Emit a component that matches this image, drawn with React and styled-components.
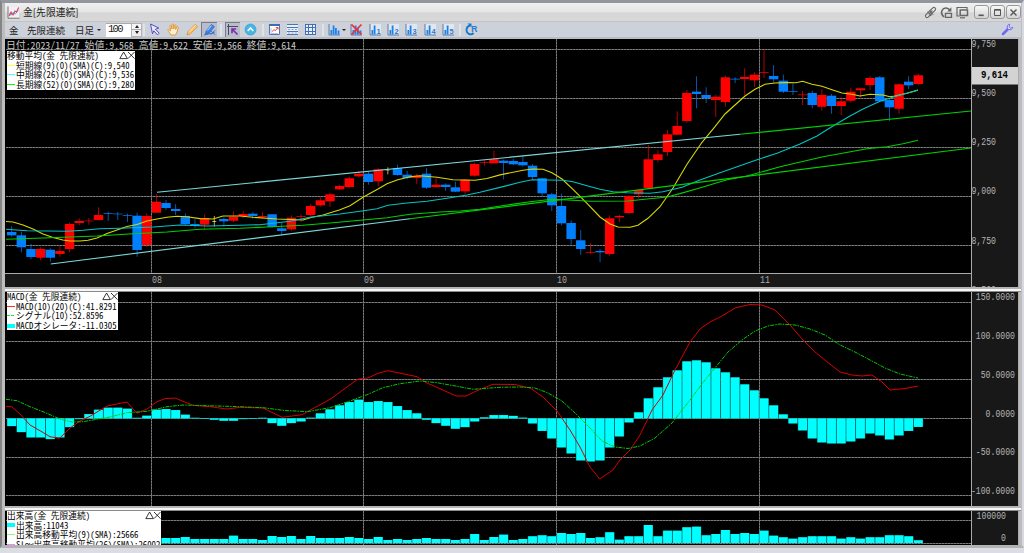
import React from 'react';
import styled, { createGlobalStyle } from 'styled-components'

const RED = '#ff0000';
const BLUE = '#0080ff';
const CYAN = '#00ffff';
const FIRST_X = 11.7;
const PITCH = 9.645;

const xAt = (i) => FIRST_X + i * PITCH;

// [color, body top, body bottom, high, low]
const candles = [
  ['b', 232, 235.3, 226, 236.7], ['b', 235.3, 247.3, 231.7, 252.3], ['b', 249, 257, 244, 259],
  ['r', 249, 257.7, 247.3, 260], ['b', 249.7, 257.7, 248.3, 261.7], ['r', 251, 254, 246, 256.7],
  ['r', 224, 249, 222.7, 252.3], ['r', 221, 223, 218.3, 225.3], ['r', 220.7, 221.3, 218, 224.7],
  ['r', 215, 220, 207.3, 220], ['b', 213.3, 214, 211.7, 221], ['b', 213.7, 214.3, 212, 220],
  ['b', 215.3, 216, 213.7, 222], ['b', 215.7, 250, 212.7, 256.7], ['r', 216, 245, 213.3, 246.7],
  ['r', 201.7, 212.7, 194, 212.7], ['b', 203, 208, 200, 210], ['b', 209, 211, 204, 215],
  ['b', 216, 224, 213.3, 226], ['b', 224, 226, 219.3, 227.7], ['r', 218, 224.7, 214.7, 229.3],
  ['y', 221, 221.7, 216, 226.7], ['b', 219, 221.3, 217.3, 226.7], ['r', 216.7, 220.7, 211.3, 222],
  ['r', 214, 216, 211.3, 218], ['b', 213.7, 216, 212.3, 218.7], ['r', 216, 217, 212.3, 218.3],
  ['b', 214.3, 227, 214, 227.7], ['b', 228.3, 231, 222.7, 235], ['r', 217.7, 229.3, 215.3, 230.7],
  ['r', 216, 216.7, 214, 221.7], ['r', 206, 215, 204, 216.7], ['r', 200.3, 205.3, 197.3, 206.7],
  ['r', 194.3, 201.3, 192.7, 207], ['r', 186, 189.3, 184.7, 190], ['r', 178.3, 187, 176.7, 187.7],
  ['r', 173.7, 176.3, 171, 177.7], ['b', 173.7, 182, 172, 184.7], ['r', 169.3, 181.3, 168.3, 186],
  ['y', 170.7, 171, 167.3, 174.3], ['b', 168.3, 175, 164.7, 175.7], ['b', 174.7, 178, 171, 179.3],
  ['r', 175.7, 178, 173.7, 184], ['b', 173.7, 187.7, 168, 189], ['r', 184.7, 187, 178.3, 187.7],
  ['b', 184.7, 187, 183.3, 191], ['b', 187.3, 191.7, 181.7, 192], ['r', 179.7, 191.3, 179, 194],
  ['r', 164, 175.7, 162.7, 176.7], ['r', 162, 162.7, 159.7, 165.7], ['r', 159, 163.3, 150.7, 163.3],
  ['b', 160.7, 163, 159.7, 179.3], ['b', 161, 164.3, 159, 165.3], ['b', 162, 165.3, 155.7, 166.3],
  ['b', 165.7, 177, 164, 180], ['b', 178.3, 193.3, 177.7, 196.7], ['b', 194.3, 205.3, 192.7, 211],
  ['b', 206, 223.3, 193.7, 225.3], ['b', 223, 239, 220.3, 244.7], ['b', 240.3, 249, 230, 254.7],
  ['r', 252, 252.7, 243, 254], ['b', 251, 252.3, 249, 262], ['r', 218.3, 254, 215.3, 255.7],
  ['r', 216, 217.3, 215, 222], ['r', 196, 213, 195.3, 214], ['r', 190, 194.3, 189, 198.3],
  ['r', 159.3, 188, 144.7, 188.7], ['r', 154.3, 160, 150.3, 162.3], ['r', 134.3, 152, 130, 156],
  ['r', 126, 134.7, 111.3, 134.7], ['r', 93, 121, 90, 122.7], ['b', 91.7, 94, 76.3, 108.3],
  ['b', 95, 98, 87.3, 103], ['r', 96.7, 100, 94.7, 117], ['r', 77.3, 102, 75.7, 106.7],
  ['b', 78.7, 79.5, 77.3, 83], ['r', 77, 79, 68.3, 95], ['r', 74.7, 80.3, 72.3, 86.7],
  ['r', 72, 72.7, 49.7, 78], ['b', 76, 79.3, 65, 82.7], ['b', 80.7, 91.7, 74.7, 93],
  ['b', 91.3, 92, 83.3, 95], ['r', 94.5, 95.2, 91, 105], ['b', 93, 105, 90.7, 108.3],
  ['r', 95, 106.7, 89.3, 110.7], ['b', 95.7, 106, 94, 113.7], ['r', 101.3, 106, 97.3, 115],
  ['r', 91.7, 100.7, 87.7, 102.7], ['r', 88.3, 90.3, 88.3, 97.3], ['r', 78, 85, 76, 90],
  ['b', 77.3, 101.3, 76, 101.7], ['b', 100, 107.3, 98.3, 121], ['r', 84.3, 108.7, 83.7, 113.7],
  ['b', 81.7, 85.3, 76.3, 89], ['r', 75.3, 84, 73.7, 85],
];

const shortMa = '6,221.5 13,222 23,225 33,229 43,234 53,237.5 63,240 70,241 80,241 88,240.3 97,238 107,233.5 117,230 127,226.5 137,224.5 147,221 157,219 167,217.3 177,216.3 187,216.7 200,218.6 213,219 223,216 240,216 253,217.3 277,219 303,220 312,217.3 323,215 340,209.7 350,205.7 363,197.3 378,189 387,183.7 397,180 410,176.7 420,175.7 437,177.3 453,179.7 475,180.3 487,178.5 500,174.9 523,170.3 533,169 543,169.3 552,172.7 562,179 573,189.3 587,203.3 600,217 610,224 618,227 630,227.3 638,225.3 648,218.3 660,206.7 673,188 687,164.3 702,142.3 715,126.7 725,114 735,105 745,96 755,89.3 765,84.3 775,83 787,82.6 796,82.7 802.7,81.3 812,84.3 822,86.3 832,89.7 842,93 852,94.3 860,96 870,94.3 883,95 890,96.7 895,96 907,93.3 918,90';
const midMa = '6,229.3 27,230.7 67,231.3 83,230.3 100,228.7 120,228.3 153,227 180,225 207,226 240,225.3 260,224.7 277,222.7 290,221.3 310,217.3 340,214 360,211.3 377,208.7 388,205.3 407,203 427,201.3 447,198.3 467,195 480,192.3 500,187.4 520,182.3 532,179.7 563,180.3 573,181.7 587,185.7 600,189.3 613,191.7 627,192.7 650,193.3 663,191.7 682,187.3 700,180 720,172.7 740,165.7 757,159.7 777,153.3 800,144 817,136 833,126 850,116 863,109 880,101.3 900,95 918,90.3';
const longMa = '6,239.3 43,238 97,236 133,233.7 167,232 200,229.3 240,228.3 267,227 303,225.3 330,223 363,220 387,217.7 410,214.3 440,212 460,211 480,209.3 507,205 530,201.7 552,199.3 573,200.3 590,201.3 628,201 647,199 667,197 680,193.6 703,187 727,179.7 747,176 780,166.8 823,156.7 867,148.7 887,146.7 903,143.7 918,140.3';

const macdLine = '6,406.3 11.7,406.7 20,414 30,425 40,430.7 50,436.7 59.5,438.3 70,428 80,421 90,416.3 107,406 117,404 127,402 137,413.3 147,409 157,401.7 165,398.7 175,398 183,401.3 193,405.3 210,406.7 227,409 240,407.3 263,408 282,417.3 302,414.7 330,399.3 358,379 368,378 378,373.3 388,370.7 417,376.7 427,383 440,388.7 456,396 466,396 477,390.7 493,384.3 515,384.5 530,388 543,397 557,411 570,430 580,447 590,467 599.7,479 613,470 620,460 630,450 640,435 652,410 663,395 675,370 690,342 700,329 710,322 722,316 735,308 750,304.5 762,305 775,310 790,325 803,340 815,352 826,361 840,372 852,375 862,376 872,375 882,382 890,390 905,388.5 918,386';
const signalLine = '6,399.3 17,400.7 30,406.7 43,411.7 60,419 72,422 83,421.7 110,417 127,412.7 147,411.3 167,406.7 183,405 217,406 240,406.7 263,407.7 283,410.3 307,411.7 330,407.7 350,401 367,394.7 383,387.7 400,383.7 420,381 437,382.7 457,386.3 473,389.3 500,387.3 520,387 535,388 548,393 562,401 575,413 590,428 602,441 615,447 628,448.5 640,446 655,438 672,423 690,400 705,380 715,368 728,352 742,340 755,331 768,326 780,324 795,325 810,329 825,335 840,345 855,352 870,360 885,368 900,374 918,378';

const oscillator = [
  -7.7, -13.7, -19, -19, -20.7, -19, -8.7, -0.7, 4.3, 8.7, 10.7, 10.7, 9.7, 0.6, 2.7, 8.7, 9.3, 8.3, 3.7,
  0.6, -0.6, -1.3, -2.3, -2.3, -0.7, -0.6, 0.6, -4.7, -7.3, -4.7, -3, 0.7, 5, 9, 13, 16.3, 18.7, 16.3,
  17.3, 16.3, 12.3, 8.3, 5, -1.3, -4.7, -7.3, -10.3, -8.7, -3, 1, 3.3, 3.3, 2.5, 0.7, -5, -12.5, -20, -29,
  -35, -42, -43, -42, -29, -18, -4, 6, 20, 31, 41, 48, 57, 58, 56, 50, 46, 41, 34, 28, 20, 13, 4, -5, -12,
  -20, -24, -25, -25, -23, -20, -15, -17, -21, -17, -12.5, -8.5,
];

const volume = [
  5, 5, 5, 5, 5, 5, 5, 5, 5, 5, 5, 5, 5, 5, 5, 5, 5, 5, 6, 4, 4, 4, 4, 7.3, 4, 4, 3, 7, 6, 7, 4, 7, 5, 5, 5,
  6, 5, 4, 6, 3, 4, 3, 4, 5, 4, 4, 3, 4, 9, 3, 6, 8.3, 3, 4, 6.7, 7.7, 6.7, 10, 9, 10, 5, 5.7, 10.7, 3.3,
  6.7, 6.7, 18, 6.7, 12.3, 12.3, 15.7, 16.3, 7.7, 9, 13, 9, 10, 9, 12.3, 7.3, 5.7, 4.3, 5.7, 6.7, 6.7, 6.7,
  4.3, 5.7, 4.3, 5.7, 5.7, 7.7, 7.7, 6.7, 2.7,
];

const months = [[151.5, '08'], [363.5, '09'], [556.5, '10'], [759.5, '11']];
const candleColor = { r: RED, b: BLUE, y: '#ffff80' };

const GridLines = ({ rows, top, bottom }) => (
  <>
    {rows.map((y) => <line key={y} x1="6" x2="971" y1={y} y2={y} />)}
    {months.map(([x]) => <line key={x} x1={x} x2={x} y1={top} y2={bottom} />)}
  </>
);

const Grid = (props) => (
  <g shapeRendering="crispEdges">
    <g stroke="#4e4e4e"><GridLines {...props} /></g>
    <g stroke="#7c7c7c" strokeDasharray="2 1"><GridLines {...props} /></g>
  </g>
);

const Bars = ({ data, base }) => (
  <g>
    {data.map((h, i) => (
      <g key={i}>
        <rect x={xAt(i) - PITCH / 2} width={PITCH} y={h > 0 ? base - h : base} height={Math.abs(h)} fill="#007c7c" />
        <rect x={xAt(i) - 4.4} width="8.8" y={h > 0 ? base - h : base} height={Math.abs(h)} fill={CYAN} />
      </g>
    ))}
  </g>
);

const PriceChart = () => (
  <Plot width="966" height="234" viewBox="5 39 966 234">
    <Grid rows={[49.5, 98.5, 147.5, 196.5, 245.5]} top={39} bottom={273} />
    {candles.map(([c, top, bottom, high, low], i) => (
      <g key={i} fill={candleColor[c]}>
        <rect x={xAt(i) - 0.4} width="0.8" y={high} height={low - high} opacity="0.85" />
        <rect x={xAt(i) - (c === 'y' ? 2 : 4.7)} width={c === 'y' ? 4 : 9.4} y={top} height={bottom - top} />
      </g>
    ))}
    <g fill="none" strokeWidth="1.1">
      <polyline points={shortMa} stroke="#d8d800" />
      <polyline points={midMa} stroke="#00c4c4" />
      <polyline points={longMa} stroke="#00d000" />
      <path d="M157 192.3L740 134.3M50.7 264L410 218.7" stroke="#7cd8d8" />
      <path d="M740 134.3L971 111M410 218.7L971 148" stroke="#00d000" />
    </g>
  </Plot>
);

const MacdChart = () => (
  <Plot width="966" height="214" viewBox="5 292 966 214">
    <Grid rows={[302.5, 341.5, 379.5, 418.5, 457.5, 495.5]} top={292} bottom={506} />
    <Bars data={oscillator} base={418.4} />
    <polyline points={macdLine} fill="none" stroke="#d80000" />
    <polyline points={signalLine} fill="none" stroke="#00c800" strokeDasharray="4 1 1.5 1" />
  </Plot>
);

const VolumeChart = () => (
  <Plot width="966" height="34" viewBox="5 511 966 34">
    <Grid rows={[520.5, 543.5]} top={511} bottom={545} />
    <Bars data={volume} base={543} />
  </Plot>
);

// labels: [text, right edge, baseline]
const Scale = ({ top, height, labels, children }) => (
  <ScaleBox width="46" height={height} viewBox={`972 ${top} 46 ${height}`}>
    {labels.map(([text, right, y]) => (
      <text key={text} x={right - text.length * 4.9} y={y} textLength={text.length * 4.9} lengthAdjust="spacingAndGlyphs">{text}</text>
    ))}
    {children}
  </ScaleBox>
);

const LegendBox = ({ title, width, height, top, items }) => (
  <Legend $width={width} $height={height} $top={top}>
    <LegendRow>
      <span>{title}</span>
      <svg width="16" height="9" viewBox="0 0 16 9" fill="none" stroke="#222" strokeWidth="0.9">
        <path d="M0.8 7.6h7.6L4.6 1zM9 1l6.5 6.6M15.5 1L9 7.6" />
      </svg>
    </LegendRow>
    {items.map(([label, color, kind]) => (
      <LegendItem key={label}>
        <Swatch $color={color} $kind={kind} />
        {label}
      </LegendItem>
    ))}
  </Legend>
);

const BarsIcon = ({ mark, cross }) => (
  <svg width="13" height="13" viewBox="0 0 13 13">
    {mark && <path d="M1 1h11v11H1z" fill="#e2e6ee" />}
    <path d="M1 1v11h11" stroke="#5f7ba5" fill="none" />
    <path d="M2.5 7h1.7v4.5H2.5zM4.7 2.5h1.8v9H4.7z" fill="#1683ee" />
    {mark
      ? <MarkText x="7.4" y="10.6">{mark}</MarkText>
      : <path d="M7 5h1.8v6.5H7zM9.6 7.5h1.8v4H9.6z" fill="#1683ee" />}
    {cross && <path d="M1.5 1.5l10 10M11.5 1.5l-10 10" stroke="#ef3038" strokeWidth="1.7" />}
  </svg>
);

const CursorIcon = () => (
  <svg width="12" height="13" viewBox="0 0 12 13">
    <path d="M1.5 1l8.3 4-3.4 1.2 3.8 4-1.7 1.7-3.7-4.1-1.3 3z" fill="#e9e7ff" stroke="#5750c4" />
  </svg>
);

const HandIcon = () => (
  <svg width="13" height="13" viewBox="0 0 13 13">
    <path d="M4 12L1 7.4C.5 6.3 1.7 6 2.3 6.8L3.6 8 3 3.2c0-1.1 1.2-1.1 1.4-.2L5 6V1.8c0-1.1 1.4-1.1 1.5 0L6.8 6l.7-3.6c.2-1 1.5-.8 1.4.2L8.6 6.5 10 4c.6-.9 1.6-.3 1.2.6L10 9l-1.4 3z" fill="#fff0d2" stroke="#df922c" strokeWidth="0.9" />
  </svg>
);

const PencilIcon = () => (
  <svg width="13" height="13" viewBox="0 0 13 13">
    <path d="M1 12l1.2-3.6L9.3 1.3l2.3 2.3-7.2 7.2z" fill="#ffc367" stroke="#d98b2e" strokeWidth="0.8" />
    <path d="M3.2 8.5l6.3-6.2" stroke="#fff0cd" />
  </svg>
);

const DrawLineIcon = () => (
  <svg width="13" height="13" viewBox="0 0 13 13">
    <path d="M3 8.5l5.5-7 2.8 2.2L6 10l-3.4 1z" fill="#3589ef" stroke="#1c56b8" strokeWidth="0.7" />
    <path d="M4.5 7.5l4-5" stroke="#b9ddff" />
    <path d="M1 12l10.5-2.5M8 7.8l4 4M12 7.3l-4.3 4.5" stroke="#2868c8" strokeWidth="0.9" />
  </svg>
);

const CrosshairIcon = () => (
  <svg width="13" height="13" viewBox="0 0 13 13" fill="none">
    <path d="M2.5 1v11M1 3.5h11" stroke="#4a4a63" />
    <path d="M11.5 11.5l-5-5M6 10.2V6h4.2" stroke="#7a2fa8" strokeWidth="1.7" />
  </svg>
);

const UpIcon = () => (
  <svg width="13" height="13" viewBox="0 0 13 13">
    <circle cx="6.5" cy="6.5" r="5.5" fill="#45b7e4" stroke="#2d93c8" strokeWidth="0.6" />
    <path d="M3.7 7.9l2.8-3 2.8 3" fill="none" stroke="#fff" strokeWidth="1.5" />
  </svg>
);

const TableIcon = ({ kind }) => (
  <svg width="13" height="13" viewBox="0 0 13 13" fill="none">
    <path d="M1 1h11v11H1z" fill={kind === 'chart' ? '#fff' : '#e9eef7'} />
    {kind === 'chart' && (
      <>
        <path d="M1.5 1.5h10v10h-10z" stroke="#4e76b6" />
        <path d="M1 2h11" stroke="#3d6cb4" strokeWidth="2" />
        <path d="M3 5v5.5h7" stroke="#b6c3d8" />
        <path d="M4 8.5l2-1.8 1.3 1L10 4.5M7.8 4.5H10v2" stroke="#ee4444" />
      </>
    )}
    {kind === 'rows' && (
      <>
        <path d="M1 1.5h11M1 4.5h11M1 8.5h11M1 11.5h11" stroke="#4975b7" />
        <path d="M2 6.5h9M2 10h9" stroke="#8ea9d2" strokeDasharray="2 1.5" />
      </>
    )}
    {kind === 'grid' && <path d="M1.5 1v11M4.5 1v11M8.5 1v11M11.5 1v11M1 1.5h11M1 4.5h11M1 8.5h11M1 11.5h11" stroke="#416eb5" />}
  </svg>
);

const ReloadIcon = () => (
  <svg width="13" height="13" viewBox="0 0 13 13" fill="none">
    <path d="M5 2.5C1 3.5.3 9 3.8 10.8c1.7.9 3.7.4 4.8-.8" stroke="#167bc7" strokeWidth="1.9" />
    <path d="M2.5.5h4v4z" fill="#167bc7" />
    <MarkText x="6.3" y="9.4" $big>R</MarkText>
  </svg>
);

const WrenchIcon = () => (
  <svg width="13" height="13" viewBox="0 0 13 13" fill="none">
    <path d="M2 11l5-5" stroke="#7068ef" strokeWidth="2.6" strokeLinecap="round" />
    <path d="M8.7 1.2C6.4 1.5 5.6 3.5 6.5 5.2l1.3 1.3c1.8.8 3.7-.2 4-2.3L9.7 5.3 8 3.8z" fill="#e1e0ff" stroke="#7068ef" />
  </svg>
);

const LogoIcon = () => (
  <svg width="13" height="13" viewBox="0 0 13 13" fill="none">
    <path d="M1 1h11v11H1z" fill="#f1f1f3" />
    <path d="M1 .5v11.7h11.5" stroke="#777" />
    <path d="M2 10l2-4 2 3 2-4 1.5 1 2.2-4.5" stroke="#e24058" strokeWidth="1.1" />
    <path d="M2 7.5l2 1.8 2.3-3 1.7 2 3.5-4" stroke="#4b78d0" strokeWidth="0.7" />
  </svg>
);

const LinkIcon = () => (
  <svg width="13" height="13" viewBox="0 0 13 13" fill="none" stroke="#666" strokeWidth="1.1">
    <path d="M5.2 5.5l3.6-3.6c1.6-1.2 3.6.4 2.4 2.2L8 7.3M7.8 7.5l-3.6 3.6c-1.6 1.2-3.6-.4-2.4-2.2L5 5.7M4.8 8.3l3.5-3.7M5.4 4l3.8 4.6M3.7 5.4l3.6 4.4" />
  </svg>
);

const DetachIcon = () => (
  <svg width="13" height="13" viewBox="0 0 13 13" fill="none" stroke="#666">
    <path d="M9.8 4.2C8 1 3.5 1.4 2 4.5.8 7.3 2.3 10 4.3 10.8" strokeWidth="1.6" />
    <path d="M11.4 1.2v4.2H7.2z" fill="#666" stroke="none" />
    <path d="M5.5 7.3h6v4h-6z" strokeWidth="1.3" />
  </svg>
);

const WindowsIcon = () => (
  <svg width="13" height="13" viewBox="0 0 13 13" fill="none" stroke="#666" strokeWidth="1.2">
    <path d="M3.5 10H1V1.5h10v1.5" />
    <path d="M4.2 4h7.3v5.5H4.2z" strokeWidth="1.5" />
    <path d="M4 11.8h5" />
  </svg>
);

const App = () => {
  return (
    <Frame>
      <Global />
      <TitleBar>
        <LogoIcon />
        <Title>金[先限連続]</Title>
        <LinkIcon />
        <DetachIcon />
        <WindowsIcon />
        <WindowButtons>
          <WindowButton><svg width="9" height="9" viewBox="0 0 9 9"><path d="M1.5 7.3h5.2" stroke="#555" strokeWidth="1.6" /></svg></WindowButton>
          <WindowButton><svg width="9" height="9" viewBox="0 0 9 9"><path d="M1.5 1.5h6v6h-6zM1.5 2.2h6" fill="none" stroke="#555" /></svg></WindowButton>
          <WindowButton><svg width="9" height="9" viewBox="0 0 9 9"><path d="M1.5 1.5l6 6M7.5 1.5l-6 6" stroke="#555" strokeWidth="1.4" /></svg></WindowButton>
        </WindowButtons>
      </TitleBar>
      <Toolbar>
        <Label $width={18}>金</Label>
        <Label $width={48}>先限連続</Label>
        <Label $width={22}>日足</Label>
        <Caret $width={9} />
        <CountInput>100</CountInput>
        <Spinner><span /><i /></Spinner>
        <Separator $width={4} />
        <Tool $width={18}><CursorIcon /></Tool>
        <Tool $width={19}><HandIcon /></Tool>
        <Tool $width={18}><PencilIcon /></Tool>
        <Tool $width={16} $active><DrawLineIcon /></Tool>
        <Separator $width={8} />
        <Tool $width={15} $active><CrosshairIcon /></Tool>
        <Tool $width={20}><UpIcon /></Tool>
        <Separator $width={6} />
        <Tool $width={16}><TableIcon kind="chart" /></Tool>
        <Tool $width={21}><TableIcon kind="rows" /></Tool>
        <Tool $width={15}><TableIcon kind="grid" /></Tool>
        <Separator $width={9} />
        <Tool $width={15}><BarsIcon /></Tool>
        <Caret $width={5} />
        <Tool $width={19}><BarsIcon cross /></Tool>
        {['1', '2', '3', '4', '5'].map((n) => <Tool key={n} $width={18.3}><BarsIcon mark={n} /></Tool>)}
        <Separator $width={6} />
        <Tool $width={16}><ReloadIcon /></Tool>
        <Settings><WrenchIcon /></Settings>
      </Toolbar>
      <Panel $height={248}>
        <Column>
          <PlotBox $height={234}>
            <PriceChart />
            <Info>日付:2023/11/27 始値:9,568 高値:9,622 安値:9,566 終値:9,614</Info>
            <LegendBox
              title="移動平均(金 先限連続)" width={128} height={39} top={12}
              items={[
                ['短期線(9)(0)(SMA)(C):9,540', '#ffff40', 'line'],
                ['中期線(26)(0)(SMA)(C):9,536', '#40ffff', 'line'],
                ['長期線(52)(0)(SMA)(C):9,280', '#00ff00', 'line'],
              ]}
            />
          </PlotBox>
          <TimeAxis width="966" height="14" viewBox="5 273 966 14">
            <path d="M5 273.5h966" stroke="#aaa" />
            {months.map(([x, m]) => <text key={m} x={x + 0.5} y="283" textLength="10" lengthAdjust="spacingAndGlyphs">{m}</text>)}
          </TimeAxis>
        </Column>
        <Scale
          top={39} height={248}
          labels={[['9,750', 996, 47], ['9,500', 996, 96.3], ['9,250', 996, 145.2], ['9,000', 996, 194.4], ['8,750', 996, 243.5], ['8,500', 996, 292.7]]}
        >
          <rect x="971" y="67" width="48" height="17.5" fill="#d3d3d3" />
          <PriceText x="981" y="78.3" textLength="27" lengthAdjust="spacingAndGlyphs">9,614</PriceText>
        </Scale>
      </Panel>
      <Splitter />
      <Panel $height={214}>
        <PlotBox $height={214}>
          <MacdChart />
          <LegendBox
            title="MACD(金 先限連続)" width={111} height={38} top={0}
            items={[
              ['MACD(10)(20)(C):41.8291', '#ff3030', 'line'],
              ['シグナル(10):52.8596', '#30e030', 'dash'],
              ['MACDオシレータ:-11.0305', CYAN, 'bar'],
            ]}
          />
        </PlotBox>
        <Scale
          top={292} height={214}
          labels={[['150.0000', 1015, 300], ['100.0000', 1015, 339], ['50.0000', 1015, 377.5], ['0.0000', 1015, 416.5], ['-50.0000', 1015, 455], ['-100.0000', 1015, 494]]}
        />
      </Panel>
      <Splitter />
      <Panel $height={34}>
        <PlotBox $height={34}>
          <VolumeChart />
          <LegendBox
            title="出来高(金 先限連続)" width={154} height={34} top={0}
            items={[
              ['出来高:11043', CYAN, 'bar'],
              ['出来高移動平均(9)(SMA):25666', '#80ff80', 'line'],
              ['Slow出来高移動平均(26)(SMA):26002', '#ff80ff', 'line'],
            ]}
          />
        </PlotBox>
        <Scale top={511} height={34} labels={[['100000', 1006, 518.7], ['0', 1006, 541]]} />
      </Panel>
    </Frame>
  )
};

const Global = createGlobalStyle`
  body {
    margin: 0;
    overflow: hidden;
    background: #dcdce5;
  }
`

const Frame = styled.div`
  box-sizing: border-box;
  width: 1024px;
  height: 548px;
  display: flex;
  flex-direction: column;
  border-top: 3px solid #93979d;
  border-left: 2px solid #858585;
  border-right: 2px solid #d8d8e2;
  border-bottom: 3px solid #b3b3b3;
  padding: 0 1px 0 3px;
  background: #bdbdbd;
  color: #222;
  font-family: 'Noto Sans CJK JP', sans-serif;
`

const TitleBar = styled.div`
  height: 18px;
  flex: none;
  display: flex;
  align-items: center;
  gap: 3px;
  padding-left: 2px;
  background: linear-gradient(#f0f0f0, #e5e5e5 50%, #d6d6d6 55%, #d8d8d8);
`

const Title = styled.div`
  flex: 1;
  font-size: 9.8px;
  line-height: 18px;
`

const WindowButtons = styled.div`
  display: flex;
  gap: 1px;
  margin-left: 2px;
`

const WindowButton = styled.div`
  box-sizing: border-box;
  width: 15px;
  height: 14px;
  display: flex;
  align-items: center;
  justify-content: center;
  border: 1px solid #999;
  border-radius: 3px;
  background: linear-gradient(#f8f8f8, #d2d2d2);
`

const Toolbar = styled.div`
  box-sizing: border-box;
  height: 18px;
  flex: none;
  display: flex;
  align-items: center;
  padding-left: 4px;
  background: #cdd1da;
  border-top: 1px solid #c3c3c3;
  border-bottom: 2px solid #b9bcc2;
`

const Label = styled.div`
  width: ${props => props.$width}px;
  flex: none;
  font-size: 9.5px;
  line-height: 16px;
  white-space: nowrap;
`

const Caret = styled.div`
  width: ${props => props.$width}px;
  flex: none;
  display: flex;
  &::after {
    content: '';
    border: 2px solid transparent;
    border-top: 2.5px solid #222;
    border-bottom: 0;
  }
`

const CountInput = styled.div`
  box-sizing: border-box;
  width: 25px;
  height: 14px;
  flex: none;
  padding-left: 2px;
  background: #fff;
  border-top: 1px solid #aaa;
  font-family: 'Liberation Mono', monospace;
  font-size: 10.5px;
  letter-spacing: -1.7px;
  line-height: 10px;
`

const Spinner = styled.div`
  box-sizing: border-box;
  width: 11px;
  height: 14px;
  flex: none;
  display: flex;
  flex-direction: column;
  align-items: center;
  justify-content: center;
  gap: 3px;
  border: 1px solid #b3b3b3;
  background: linear-gradient(#f6f6f6 45%, #aaa 45%, #aaa 53%, #eee 53%);
  span {
    border: 2.5px solid transparent;
    border-bottom: 3px solid #222;
    border-top: 0;
  }
  i {
    border: 2.5px solid transparent;
    border-top: 3px solid #222;
    border-bottom: 0;
  }
`

const Separator = styled.div`
  width: ${props => props.$width}px;
  height: 12px;
  flex: none;
  background: linear-gradient(#dfe2e8, #dfe2e8) center / 2px 100% no-repeat;
`

const Tool = styled.div`
  box-sizing: border-box;
  width: ${props => props.$width}px;
  height: 15px;
  flex: none;
  display: flex;
  align-items: center;
  justify-content: center;
  background: ${props => props.$active ? '#b9bdcb' : 'none'};
  box-shadow: ${props => props.$active ? 'inset 1px 1px #777d8d' : 'none'};
`

const Settings = styled.div`
  display: flex;
  margin-left: auto;
  padding-right: 7px;
`

const MarkText = styled.text`
  font-family: 'Liberation Sans', sans-serif;
  font-size: ${props => props.$big ? 8.5 : 7.5}px;
  font-weight: bold;
  fill: #2f78cf;
`

const Panel = styled.div`
  height: ${props => props.$height}px;
  flex: none;
  display: flex;
`

const Column = styled.div`
  display: flex;
  flex-direction: column;
`

const PlotBox = styled.div`
  position: relative;
  width: 966px;
  height: ${props => props.$height}px;
  overflow: hidden;
`

const Plot = styled.svg`
  display: block;
  background: #000;
`

const TimeAxis = styled.svg`
  display: block;
  background: #181818;
  font-family: 'Liberation Mono', monospace;
  font-size: 11.5px;
  fill: #aaa;
`

const ScaleBox = styled.svg`
  display: block;
  background: #181818;
  border-left: 1px solid #aaa;
  border-right: 1px solid #aaa;
  font-family: 'Liberation Mono', monospace;
  font-size: 11.5px;
  fill: #b4b4b4;
`

const PriceText = styled.text`
  font-weight: bold;
  fill: #000;
`

const Splitter = styled.div`
  box-sizing: border-box;
  height: 5px;
  flex: none;
  background: #f6f6f6;
  border-top: 2px solid #b5b5b5;
  border-bottom: 1px solid #8c8c8c;
`

const Info = styled.div`
  position: absolute;
  left: 1px;
  top: 1px;
  font-size: 9.83px;
  line-height: 11px;
  font-feature-settings: 'hwid';
  white-space: pre;
  color: #c8c8c8;
`

const Legend = styled.div`
  position: absolute;
  left: 2px;
  top: ${props => props.$top}px;
  width: ${props => props.$width}px;
  height: ${props => props.$height}px;
  overflow: hidden;
  background: #fff;
  color: #000;
  font-size: 8.75px;
  line-height: 9.6px;
  font-feature-settings: 'hwid';
  white-space: pre;
`

const LegendRow = styled.div`
  display: flex;
  align-items: center;
  justify-content: space-between;
  height: 9.6px;
`

const LegendItem = styled.div`
  display: flex;
  align-items: center;
  height: 9.6px;
`

const swatchHeight = { line: 1, dash: 1, bar: 4 }

const Swatch = styled.div`
  width: 8px;
  height: ${props => swatchHeight[props.$kind]}px;
  margin-right: 1px;
  flex: none;
  background: ${props => props.$kind === 'dash'
    ? `repeating-linear-gradient(90deg, ${props.$color} 0 3px, #fff 3px 4px)`
    : props.$color};
`

export default App;
